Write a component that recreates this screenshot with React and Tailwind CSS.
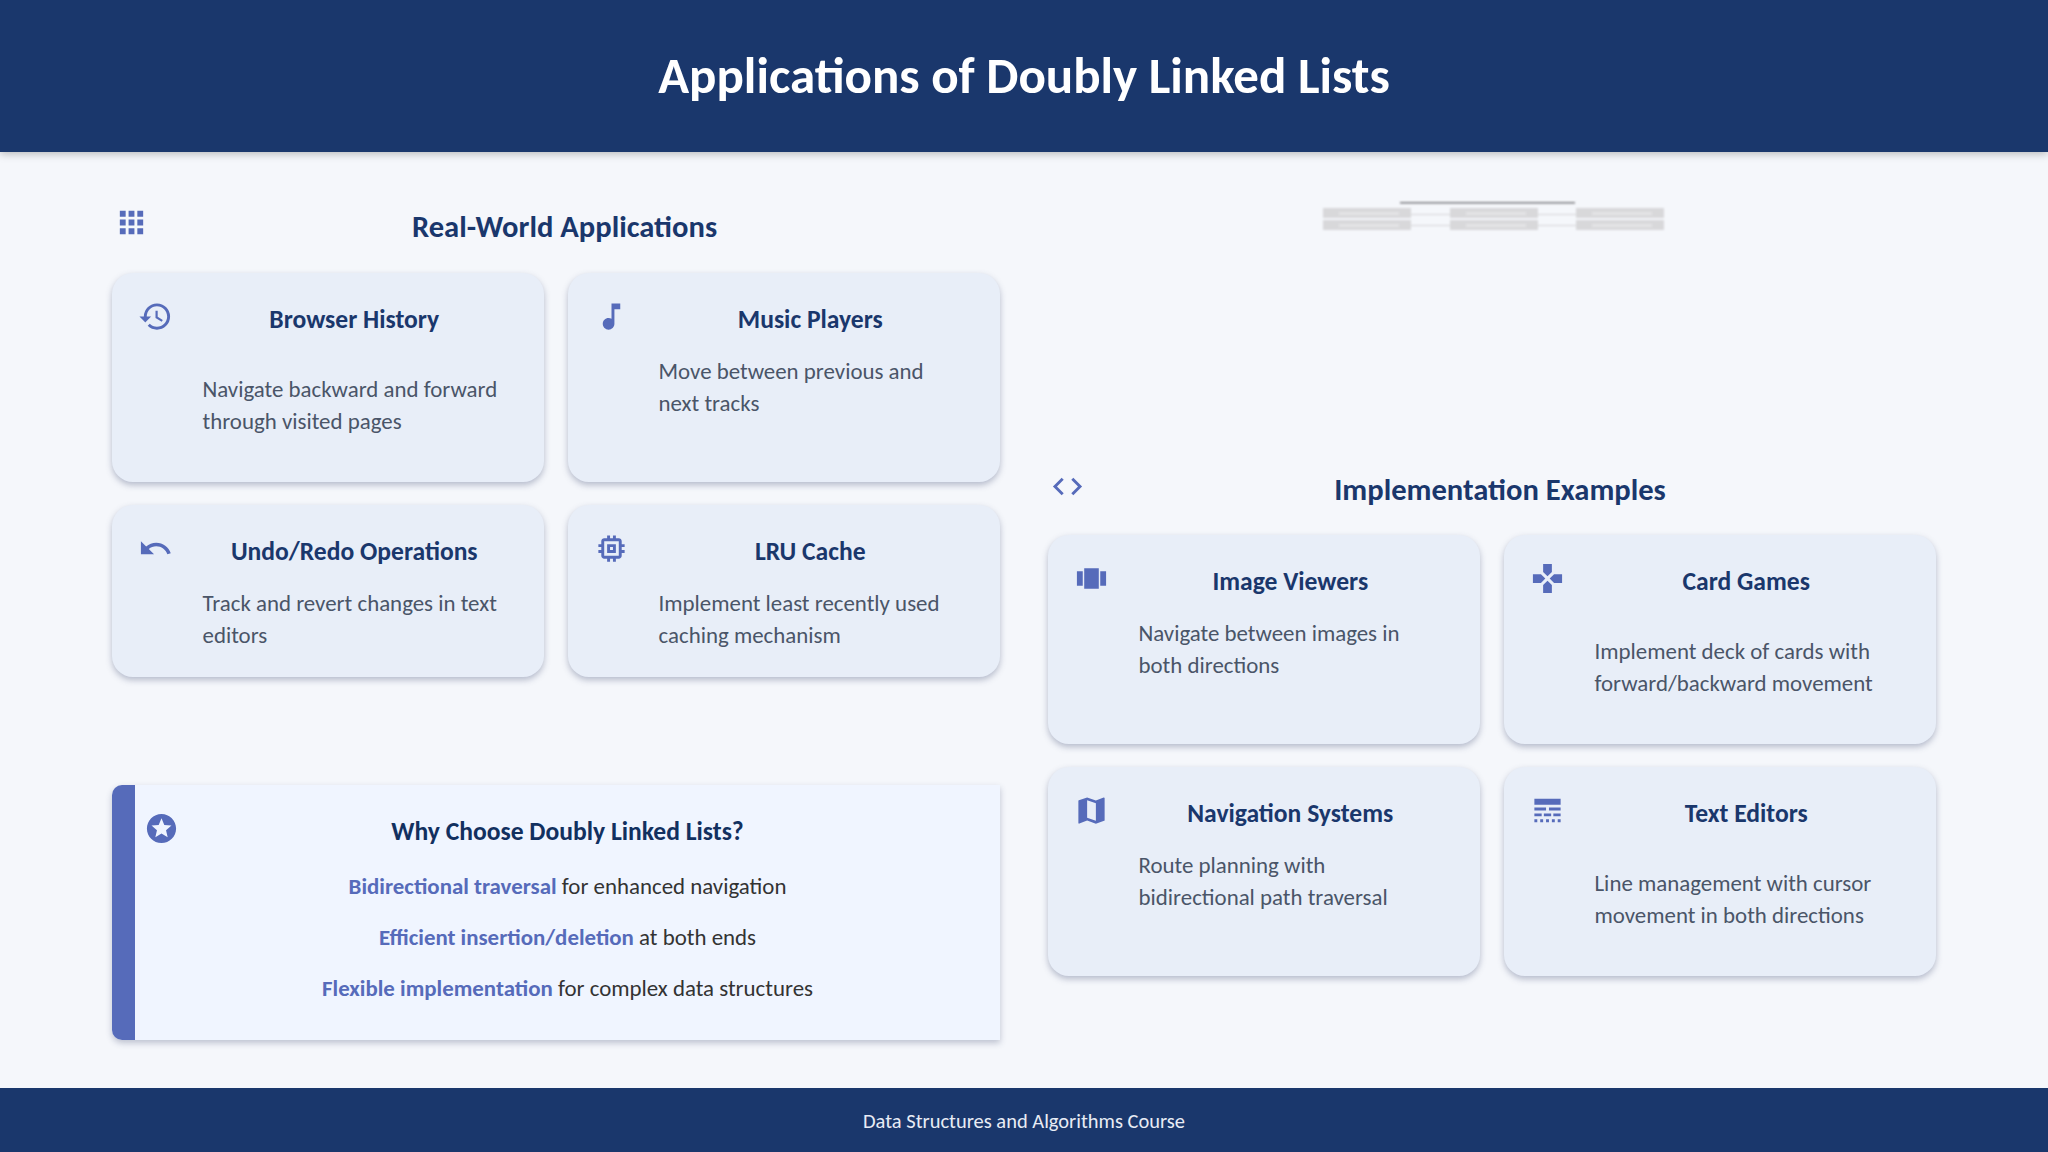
import { MdApps, MdHistory, MdMusicNote, MdUndo, MdMemory, MdCode, MdViewCarousel, MdGamepad, MdMap, MdLineStyle, MdStars } from 'react-icons/md'

function Card({ icon: Icon, title, desc, gap, height }) {
  return (
    <div className={`flex rounded-[21px] bg-[#e8eef8] pl-[26px] pr-[38px] pt-[31px] shadow-[0_3px_6px_rgba(60,70,110,0.34)] ${height}`}>
      <div className="w-[64.5px] shrink-0">
        <Icon size={35} className="text-[#566bba] -mt-[5px]" />
      </div>
      <div className="flex-1">
        <h3 className={`text-center text-[25.6px] leading-[32px] font-bold text-[#1a376c] ${gap}`}>{title}</h3>
        <p className="text-[22.9px] leading-[32px] text-[#4a5568]">{desc}</p>
      </div>
    </div>
  )
}

function SectionTitle({ icon: Icon, title, pad, drop }) {
  return (
    <div className={`flex h-[48px] items-center ${pad}`}>
      <Icon size={35} className="shrink-0 -mt-[8px] text-[#566bba]" />
      <h2 className={`flex-1 text-center text-[30.6px] font-bold text-[#1a376c] ${drop}`}>{title}</h2>
    </div>
  )
}

function Why({ lead, rest }) {
  return (
    <p className="text-center text-[22.9px] leading-[32px] text-[#333333]">
      <strong className="font-bold text-[#566bba]">{lead}</strong> {rest}
    </p>
  )
}

// the blurred list diagram at the top right
function ListDiagram() {
  return (
    <svg width="360" height="48" viewBox="0 0 360 48" className="ml-[271px]">
      <defs>
        <filter id="soft"><feGaussianBlur stdDeviation="1.3" /></filter>
      </defs>
      <g filter="url(#soft)">
        <rect x="81" y="4" width="175" height="1.5" fill="#77777a" />
        {[4, 131, 257].map((x) => (
          <g key={x}>
            <rect x={x} y="10" width="88" height="10" fill="#d8d8da" />
            <rect x={x} y="22" width="88" height="10" fill="#d8d8da" />
            <rect x={x + 16} y="14" width="60" height="3" fill="#e4e4e6" />
            <rect x={x + 16} y="26" width="60" height="3" fill="#e4e4e6" />
          </g>
        ))}
        <rect x="92" y="16" width="39" height="1" fill="#d4d4d6" />
        <rect x="92" y="27" width="39" height="1" fill="#d4d4d6" />
        <rect x="219" y="16" width="38" height="1" fill="#d4d4d6" />
        <rect x="219" y="27" width="38" height="1" fill="#d4d4d6" />
      </g>
    </svg>
  )
}

export default function App() {
  return (
    <div className="flex h-[1152px] w-[2048px] flex-col overflow-hidden bg-[#f5f7fb] font-['Carlito','Lato',sans-serif]">
      <header className="z-10 flex h-[152px] shrink-0 items-center justify-center bg-[#1a376c] shadow-[0_2px_8px_rgba(0,0,0,0.25)]">
        <h1 className="text-[51px] font-bold text-white">Applications of Doubly Linked Lists</h1>
      </header>

      <main className="flex flex-1 gap-[48px] px-[112px]">
        <section className="w-[888px] pt-[50px]">
          <SectionTitle icon={MdApps} title="Real-World Applications" pad="pl-[2px] pr-[20px]" drop="mt-[2px]" />
          <div className="mt-[23px] grid grid-cols-2 gap-x-[24px] gap-y-[23px]">
            <Card icon={MdHistory} title="Browser History" desc="Navigate backward and forward through visited pages" gap="mb-[37px]" height="h-[209px]" />
            <Card icon={MdMusicNote} title="Music Players" desc="Move between previous and next tracks" gap="mb-[19px]" height="h-[209px]" />
            <Card icon={MdUndo} title="Undo/Redo Operations" desc="Track and revert changes in text editors" gap="mb-[19px]" height="h-[172px]" />
            <Card icon={MdMemory} title="LRU Cache" desc="Implement least recently used caching mechanism" gap="mb-[19px]" height="h-[172px]" />
          </div>
          <div className="mt-[108px] flex h-[255px] overflow-hidden rounded-l-[10px] bg-[#f0f5ff] shadow-[0_3px_6px_rgba(60,70,110,0.3)]">
            <div className="w-[23px] shrink-0 bg-[#566bba]" />
            <div className="w-[38px] shrink-0 pl-[9px] pt-[26px]">
              <MdStars size={35} className="text-[#566bba]" />
            </div>
            <div className="flex-1 pr-[38px] pt-[29px]">
              <h3 className="mb-[20px] text-center text-[25.6px] leading-[36px] font-bold text-[#12305f]">Why Choose Doubly Linked Lists?</h3>
              <div className="flex flex-col gap-[19px]">
                <Why lead="Bidirectional traversal" rest="for enhanced navigation" />
                <Why lead="Efficient insertion/deletion" rest="at both ends" />
                <Why lead="Flexible implementation" rest="for complex data structures" />
              </div>
            </div>
          </div>
        </section>

        <section className="w-[888px] pt-[46px]">
          <ListDiagram />
          <div className="mt-[220px]">
            <SectionTitle icon={MdCode} title="Implementation Examples" pad="pl-[2px] pr-[21px]" drop="mt-0" />
          </div>
          <div className="mt-[21px] grid grid-cols-2 gap-x-[24px] gap-y-[23px]">
            <Card icon={MdViewCarousel} title="Image Viewers" desc="Navigate between images in both directions" gap="mb-[19px]" height="h-[209px]" />
            <Card icon={MdGamepad} title="Card Games" desc="Implement deck of cards with forward/backward movement" gap="mb-[37px]" height="h-[209px]" />
            <Card icon={MdMap} title="Navigation Systems" desc="Route planning with bidirectional path traversal" gap="mb-[19px]" height="h-[209px]" />
            <Card icon={MdLineStyle} title="Text Editors" desc="Line management with cursor movement in both directions" gap="mb-[37px]" height="h-[209px]" />
          </div>
        </section>
      </main>

      <footer className="flex h-[64px] shrink-0 items-center justify-center bg-[#1a376c] pt-[2px] text-[20.48px] text-[#e8ecf5]">
        Data Structures and Algorithms Course
      </footer>
    </div>
  )
}
